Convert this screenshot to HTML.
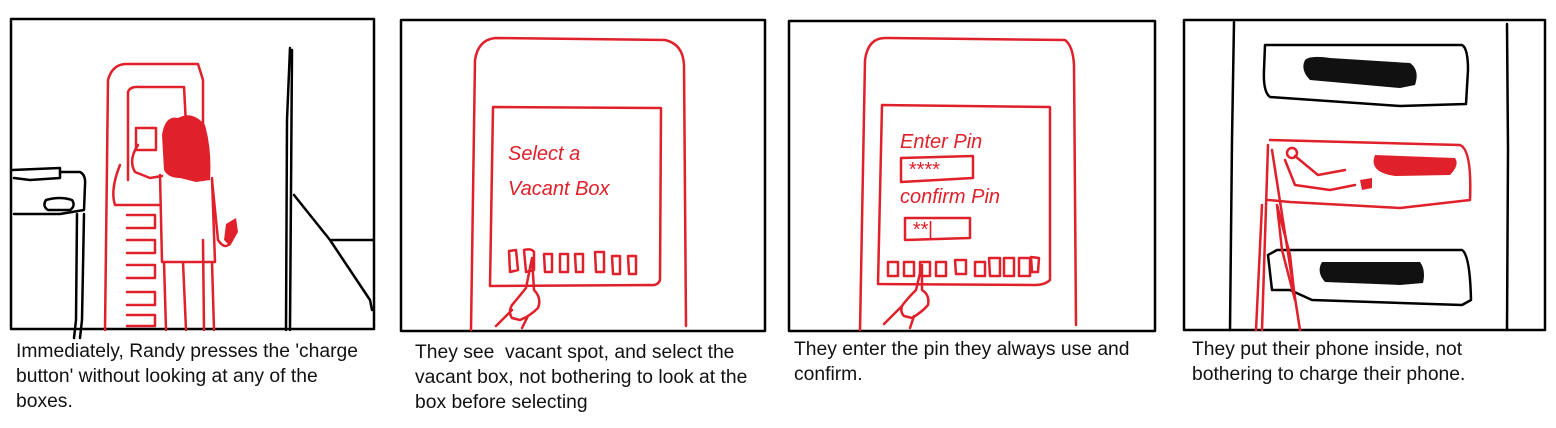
<!DOCTYPE html>
<html><head><style>
html,body{margin:0;padding:0;background:#fff;width:1556px;height:428px;overflow:hidden}
svg{position:absolute;left:0;top:0}
.cap{position:absolute;font-family:"Liberation Sans",sans-serif;font-size:19.3px;line-height:25px;color:#111;white-space:nowrap;transform:scaleX(1);transform-origin:0 0}
.hw{font-family:"Liberation Sans",sans-serif;fill:#e0202a;font-size:20px;font-style:italic}
</style></head><body>
<svg width="1556" height="428" viewBox="0 0 1556 428" fill="none" stroke-linecap="round" stroke-linejoin="round">
<g stroke="#000" stroke-width="2.5">
<rect x="11" y="19" width="363" height="310"/>
<rect x="401" y="20" width="364" height="311"/>
<rect x="789" y="21" width="366" height="310"/>
<rect x="1184" y="20" width="361" height="310"/>
</g>
<g stroke="#000" stroke-width="2.5">
<path d="M12 170 L60 168 L60 178 L30 180 L14 178"/>
<path d="M60 172 L80 172 Q86 175 85 185 L84 210 L60 214 L14 214"/>
<path d="M46 200 Q60 196 72 200 Q76 206 70 210 L48 210 Q42 206 46 200Z"/>
<path d="M77 214 L76 320 L74 338 M84 214 L82 320 L80 338"/>
<path d="M290 48 L287 120 L286 330 M292 50 L290 330"/>
<path d="M294 195 L330 240 L370 300 L372 310 M332 240 L373 240"/>
</g>
<g stroke="#e0202a" stroke-width="2.5">
<path d="M105 330 L108 80 Q112 65 125 64 L198 64 L203 80 L203 180 M203 240 L204 330"/>
<path d="M128 92 Q130 86 140 87 L184 87 L186 125 M128 92 L128 180"/>
<path d="M136 128 L156 128 L156 150 L136 150 Z"/>
<path d="M127 215 L155 215 L155 228 L127 228 M127 240 L155 240 L155 253 L127 253 M127 265 L155 265 L155 278 L127 278 M127 292 L155 292 L155 305 L127 305 M127 315 L155 315 L155 326 L127 326"/>
<path d="M138 145 Q128 160 135 172 L150 178 L162 176 M120 165 Q110 190 115 205 L160 205"/>
<path d="M160 175 L162 262 L215 262 L212 178 M183 262 L186 330 M212 262 L214 330 M164 262 L166 330"/>
<path d="M212 180 L218 240 Q226 252 232 240"/>
</g>
<g fill="#e0202a">
<path d="M162 135 Q165 115 178 118 Q192 110 205 125 Q212 150 210 180 L196 182 L180 178 Q168 178 164 170 Z"/>
<path d="M226 224 L236 218 L238 232 L230 246 L224 240 Z"/>
</g>
<g stroke="#e0202a" stroke-width="2.5">
<path d="M471 330 L475 60 Q478 40 495 38 L665 40 Q683 44 684 65 L686 326"/>
<path d="M493 107 L661 108 L660 280 Q658 286 650 285 L490 286 Z"/>
<path d="M509 251 L516 250 L518 270 L510 272 Z M524 250 Q532 248 534 252 L534 270 L526 272 Z M544 254 L552 254 L552 272 L545 272 Z M560 254 L568 254 L568 272 L560 272 Z M575 254 L583 254 L583 272 L576 272 Z M595 252 L604 252 L604 272 L596 272 Z M612 256 L620 256 L620 274 L613 274 Z M628 256 L636 256 L636 274 L629 274 Z"/>
<path d="M532 258 L526 288 Q518 298 512 305 Q508 312 512 318 L520 320 Q530 316 538 308 Q542 298 534 290 Z M512 310 L496 326 M528 316 L522 328"/>
</g>
<text class="hw" x="508" y="160">Select a</text>
<text class="hw" x="508" y="195">Vacant Box</text>
<g stroke="#e0202a" stroke-width="2.5">
<path d="M860 330 L865 60 Q868 38 885 38 L1065 40 Q1073 46 1074 65 L1076 325"/>
<path d="M882 105 L1050 107 L1050 280 Q1045 285 1035 285 L878 284 Z"/>
<path d="M901 158 L973 156 L973 178 L901 182 Z"/>
<path d="M905 218 L970 218 L970 238 L905 240 Z"/>
<path d="M888 262 L898 262 L898 276 L888 276 Z M904 262 L914 262 L914 276 L904 276 Z M920 262 L930 262 L930 276 L920 276 Z M936 262 L946 262 L946 276 L936 276 Z M955 260 L966 260 L966 274 L956 274 Z M975 262 L985 262 L985 276 L975 276 Z M989 258 L1000 258 L1000 276 L990 276 Z M1004 258 L1014 258 L1014 276 L1004 276 Z M1019 258 L1030 258 L1030 276 L1019 276 Z M1031 257 L1039 258 L1038 272 L1032 272 Z"/>
<path d="M922 265 L916 290 Q906 300 902 306 Q900 312 904 316 L912 318 Q922 312 928 305 Q930 295 922 290 Z M902 306 L884 324 M914 316 L910 328"/>
</g>
<text class="hw" x="900" y="148" font-size="18">Enter Pin</text>
<text class="hw" x="908" y="176" font-size="16">****</text>
<text class="hw" x="900" y="203" font-size="18">confirm Pin</text>
<text class="hw" x="912" y="236" font-size="16">**|</text>
<g stroke="#000" stroke-width="2.5">
<path d="M1234 22 L1232 140 L1230 330 M1507 24 L1508 150 L1507 330"/>
<path d="M1265 45 L1462 45 Q1468 48 1468 70 L1466 104 L1400 106 L1270 97 Q1263 92 1264 70 Z"/>
<path d="M1268 255 L1277 250 L1462 250 Q1470 255 1471 300 L1462 305 L1312 300 L1290 290 L1272 290 Z"/>
</g>
<g fill="#111">
<path d="M1305 60 Q1310 55 1330 58 L1410 63 Q1420 70 1415 85 L1400 88 L1310 80 Q1300 70 1305 60Z"/>
<path d="M1322 262 L1420 262 Q1426 270 1423 283 L1400 285 L1325 282 Q1316 272 1322 262Z"/>
</g>
<g stroke="#e0202a" stroke-width="2.5">
<path d="M1270 140 L1460 145 Q1472 150 1470 200 L1400 208 L1290 202 L1268 200"/>
<path d="M1268 145 L1262 330 M1272 150 L1300 330 M1262 205 L1256 330"/>
<path d="M1277 205 L1282 250 L1295 300 L1290 255 Z"/>
<circle cx="1292" cy="153" r="5"/>
<path d="M1295 156 L1318 175 L1345 170 M1285 160 L1295 185 L1330 190 L1355 185"/>
</g>
<g fill="#e0202a">
<path d="M1375 155 L1455 158 Q1460 165 1450 175 L1395 176 Q1368 172 1375 155Z"/>
<path d="M1360 180 L1372 178 L1372 188 L1362 190 Z"/>
</g>
</svg>
<div class="cap" style="left:16px;top:339px">Immediately, Randy presses the 'charge<br>button' without looking at any of the<br>boxes.</div>
<div class="cap" style="left:415px;top:340px">They see&nbsp; vacant spot, and select the<br>vacant box, not bothering to look at the<br>box before selecting</div>
<div class="cap" style="left:794px;top:337px">They enter the pin they always use and<br>confirm.</div>
<div class="cap" style="left:1192px;top:337px">They put their phone inside, not<br>bothering to charge their phone.</div>
</body></html>
